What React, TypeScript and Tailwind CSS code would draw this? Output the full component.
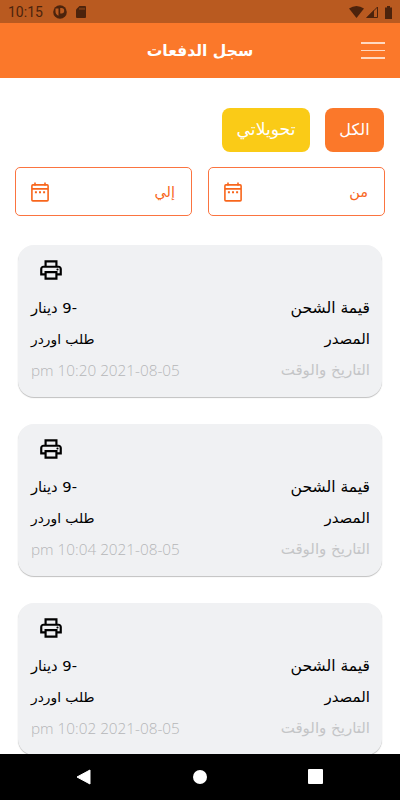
import { MdOutlineLocalPrintshop } from "react-icons/md"

interface IPayment {
	id: number
	amount: string
	source: string
	date: string
}

const payments: IPayment[] = [
	{ id: 1, amount: "-9 دينار", source: "طلب اوردر", date: "pm 10:20 2021-08-05" },
	{ id: 2, amount: "-9 دينار", source: "طلب اوردر", date: "pm 10:04 2021-08-05" },
	{ id: 3, amount: "-9 دينار", source: "طلب اوردر", date: "pm 10:02 2021-08-05" },
]

const CalendarIcon = () => (
	<svg className="h-5 w-[18px]" viewBox="0 0 18 20" fill="none" stroke="#f8661c" strokeWidth="1.6">
		<rect x="0.9" y="2.9" width="16.2" height="16" rx="1" />
		<path d="M1 6.9h16M4 0.4v3M14 0.4v3" />
		<path d="M3.9 10.2h2M8 10.2h2M12.1 10.2h2" strokeWidth="2" />
	</svg>
)

const StatusBar = () => (
	<div dir="ltr" className="flex h-[23px] shrink-0 items-center bg-[#b95a20] pl-2 pr-2 pt-px text-[#4c230c]">
		<span className="w-[45px] font-[Roboto] text-[14px] leading-none">10:15</span>
		<svg className="h-[14px] w-[14px]" viewBox="0 0 14 14">
			<circle cx="7" cy="7" r="6.8" fill="currentColor" />
			<path d="M2.5 3.5H5.500v7.200Q2.500 9.500 2.500 6.500zM7.200 3h1.300a2.700 2.700 0 0 1 0 5.400H7.200z" fill="#b95a20" />
		</svg>
		<svg className="ml-[9px] h-3 w-[10px]" viewBox="0 0 10 12">
			<path d="M3.5 0H9q1 0 1 1v10q0 1-1 1H1q-1 0-1-1V3.5z" fill="currentColor" />
			<path d="M4 1.8v2M6 1.8v2M8 1.8v2" stroke="#b95a20" strokeWidth="0.8" />
		</svg>
		<svg className="ml-auto h-3 w-[15px]" viewBox="0 0 15 12">
			<path d="M0 2.5Q7.5-2.5 15 2.5L7.5 12z" fill="currentColor" />
		</svg>
		<svg className="ml-[2px] h-3 w-3" viewBox="0 0 12 12">
			<path d="M0 12L8 4v8z" fill="currentColor" />
			<path d="M1 11.5L11.5 1v10.5z" fill="none" stroke="currentColor" />
		</svg>
		<svg className="ml-[7px] h-[13px] w-[7px]" viewBox="0 0 7 13">
			<path d="M2 0h3v1.5h2V13H0V1.5h2z" fill="currentColor" />
		</svg>
	</div>
)

const DateField = ({ label }: { label: string }) => (
	<div className="flex h-[49px] w-[177px] items-center justify-between rounded-[5px] border border-[#fb7440] pl-[15px] pr-[16px] text-[#f8661c]">
		<span className="pt-[3px] text-[14.5px]">{label}</span>
		<CalendarIcon />
	</div>
)

const PaymentCard = ({ payment }: { payment: IPayment }) => (
	<div className="h-[152px] shrink-0 rounded-[16px] bg-[#f0f1f3] pl-[13px] pr-3 text-[15px] text-black shadow-[0_1px_1px_rgba(0,0,0,0.25)]">
		<div className="flex h-[48px] items-center justify-end pl-[7px] pt-[2px]">
			<MdOutlineLocalPrintshop className="h-[26px] w-[26px]" />
		</div>
		<div className="flex h-[31px] items-center justify-between">
			<span className="text-[15.6px]">قيمة الشحن</span>
			<span className="text-[14.7px]">{payment.amount}</span>
		</div>
		<div className="flex h-[31px] items-center justify-between">
			<span>المصدر</span>
			<span className="text-[13.8px]">{payment.source}</span>
		</div>
		<div className="flex h-[31px] items-center justify-between text-[#c4c5c7]">
			<span>التاريخ والوقت</span>
			<span dir="ltr" className="font-[Open_Sans] text-[15.3px] font-light text-[#b5b6b8]">{payment.date}</span>
		</div>
	</div>
)

export default function App() {
	return (
		<div dir="rtl" className="flex h-[800px] w-[400px] flex-col overflow-hidden bg-white font-['DejaVu_Sans',sans-serif]">
			<StatusBar />
			<header className="grid h-[54.5px] shrink-0 grid-cols-[40px_1fr_40px] items-center bg-[#fb782a] text-white">
				<div className="flex flex-col gap-[6px] pr-[15px]">
					<i className="h-[1.5px] w-6 bg-[#ffd9c2]" />
					<i className="h-[1.5px] w-6 bg-[#ffd9c2]" />
					<i className="h-[1.5px] w-6 bg-[#ffd9c2]" />
				</div>
				<h1 className="pt-[2px] text-center text-[15.6px] font-bold">سجل الدفعات</h1>
			</header>
			<main className="flex min-h-0 flex-1 flex-col overflow-hidden pt-[30.5px]">
				<div className="flex shrink-0 gap-[15px] px-4 text-[16px] text-white">
					<button className="h-11 w-[59px] rounded-[8px] bg-[#fb782a]">الكل</button>
					<button className="h-11 w-[88px] rounded-[8px] bg-[#facb17] text-[17.2px]">تحويلاتي</button>
				</div>
				<div className="mt-[15px] flex shrink-0 justify-between px-[15px]">
					<DateField label="من" />
					<DateField label="إلي" />
				</div>
				<div className="mt-[29px] flex flex-col gap-[27px] px-[18px]">
					{payments.map((payment) => (
						<PaymentCard key={payment.id} payment={payment} />
					))}
				</div>
			</main>
			<nav dir="ltr" className="flex h-[46.5px] shrink-0 items-center bg-black pl-[76px]">
				<svg className="h-4 w-[15px]" viewBox="0 0 15 16">
					<path d="M14 1v14L1 8z" fill="white" stroke="white" strokeLinejoin="round" />
				</svg>
				<div className="ml-[102px] h-[14px] w-[14px] rounded-full bg-white" />
				<div className="ml-[101px] h-[15px] w-[15px] rounded-[1px] bg-white" />
			</nav>
		</div>
	)
}
